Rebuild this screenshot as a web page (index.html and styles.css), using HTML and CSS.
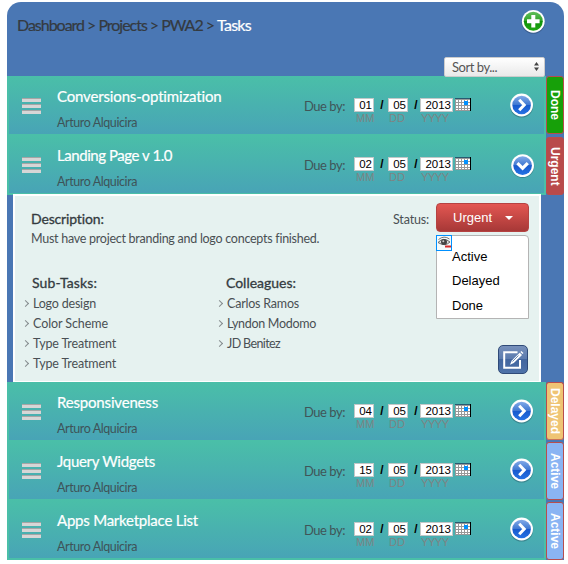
FILE: index.html
```html
<!DOCTYPE html>
<html lang="en">
<head>
<meta charset="utf-8">
<title>Tasks</title>
<link rel="stylesheet" href="styles.css">
<script src="tasks.js" defer></script>
</head>
<body>
<svg class="defs" aria-hidden="true">
  <defs>
    <linearGradient id="blue" x1="0" y1="0" x2="0" y2="1"><stop offset="0" stop-color="#82aae8"/><stop offset=".48" stop-color="#4079d2"/><stop offset=".5" stop-color="#1759cc"/><stop offset="1" stop-color="#2672e4"/></linearGradient>
    <linearGradient id="green" x1="0" y1="0" x2="0" y2="1"><stop offset="0" stop-color="#61be5c"/><stop offset=".48" stop-color="#2fa327"/><stop offset=".5" stop-color="#0f910b"/><stop offset="1" stop-color="#20a812"/></linearGradient>
    <symbol id="arrow" viewBox="0 0 26 26">
      <circle cx="12.6" cy="14" r="11.6" fill="#123" opacity=".28"/>
      <circle cx="12.6" cy="13" r="11.4" fill="#fff"/>
      <circle cx="12.6" cy="13" r="9.3" fill="url(#blue)"/>
      <path d="M10.2 7.8 L15.2 13 L10.2 18.2" fill="none" stroke="#fff" stroke-width="3"/>
    </symbol>
    <symbol id="arrow-down" viewBox="0 0 26 26">
      <circle cx="12.6" cy="13.3" r="11.6" fill="#123" opacity=".28"/>
      <circle cx="12.6" cy="12.6" r="11.4" fill="#fff"/>
      <circle cx="12.6" cy="12.6" r="9.3" fill="url(#blue)"/>
      <path d="M7.4 10.2 L12.6 15.2 L17.8 10.2" fill="none" stroke="#fff" stroke-width="3.2"/>
    </symbol>
    <symbol id="calendar" viewBox="0 0 16 13">
      <rect width="16" height="13" fill="#999"/>
      <path d="M1 2h2v2H1zM4 2h2v2H4zM7 2h2v2H7zM10 2h2v2h-2zM13 2h2v2h-2zM1 5h2v2H1zM4 5h2v2H4zM7 5h2v2H7zM13 5h2v2h-2zM1 8h2v2H1zM4 8h2v2H4zM7 8h2v2H7zM10 8h2v2h-2zM13 8h2v2h-2zM1 11h2v1H1zM4 11h2v1H4zM7 11h2v1H7zM10 11h2v1h-2zM13 11h2v1h-2z" fill="#fff"/>
      <rect width="16" height="1" fill="#285a70"/>
      <rect x="9" y="3" width="4" height="4" fill="#0090ff"/>
      <rect x="15" width="1" height="13" fill="#000"/>
    </symbol>
  </defs>
</svg>

<main class="app">
  <header class="head">
    <nav class="crumbs"><span data-w="197">Dashboard &gt; Projects &gt; PWA2 &gt;</span> <b data-w="34">Tasks</b></nav>
    <svg class="add" viewBox="0 0 26 26">
      <circle cx="13.3" cy="14.2" r="11.6" fill="#123" opacity=".28"/>
      <circle cx="13.3" cy="13.3" r="11.4" fill="#fff"/>
      <circle cx="13.3" cy="13.3" r="9.5" fill="url(#green)"/>
      <path d="M13.3 7v12.6M7 13.3h12.6" stroke="#fff" stroke-width="4"/>
    </svg>
    <div class="sort"><span data-w="45">Sort by...</span><svg viewBox="0 0 5 9"><path d="M0 3.5L2.5 0L5 3.5zM0 5.5L2.5 9L5 5.5z" fill="#444"/></svg></div>
  </header>

  <section class="task">
    <div class="row">
      <div class="handle"><i></i><i></i><i></i></div>
      <div class="name"><h2 data-w="165">Conversions-optimization</h2><p data-w="80">Arturo Alquicira</p></div>
      <span class="due"><span data-w="41">Due by:</span></span>
      <div class="date"><label><span>01</span><small>MM</small></label><em>/</em><label><span>05</span><small>DD</small></label><em>/</em><label class="year"><span>2013</span><small>YYYY</small></label><svg class="cal"><use href="#calendar"/></svg></div>
      <svg class="go"><use href="#arrow"/></svg>
    </div>
    <div class="tab done">Done</div>
  </section>

  <section class="task open">
    <div class="row">
      <div class="handle"><i></i><i></i><i></i></div>
      <div class="name"><h2 data-w="115">Landing Page v 1.0</h2><p data-w="80">Arturo Alquicira</p></div>
      <span class="due"><span data-w="41">Due by:</span></span>
      <div class="date"><label><span>02</span><small>MM</small></label><em>/</em><label><span>05</span><small>DD</small></label><em>/</em><label class="year"><span>2013</span><small>YYYY</small></label><svg class="cal"><use href="#calendar"/></svg></div>
      <svg class="go"><use href="#arrow-down"/></svg>
    </div>
    <div class="tab urgent">Urgent</div>
  </section>

  <section class="detail">
    <div class="info">
      <h3><span data-w="73">Description:</span></h3>
      <p><span data-w="288">Must have project branding and logo concepts finished.</span></p>
      <div class="lists">
        <div><h3><span data-w="65">Sub-Tasks:</span></h3>
          <ul><li><span data-w="63">Logo design</span></li><li><span data-w="75">Color Scheme</span></li><li><span data-w="83">Type Treatment</span></li><li><span data-w="83">Type Treatment</span></li></ul></div>
        <div><h3><span data-w="70">Colleagues:</span></h3>
          <ul><li><span data-w="72">Carlos Ramos</span></li><li><span data-w="89">Lyndon Modomo</span></li><li><span data-w="53">JD Benitez</span></li></ul></div>
      </div>
    </div>
    <div class="side">
      <div class="status">
        <span class="status-label"><span data-w="36">Status:</span></span>
        <div class="select">
          <div class="current">Urgent<i></i></div>
          <div class="menu">
            <svg class="eye" viewBox="0 0 16 16"><rect x=".5" y=".5" width="15" height="15" fill="#f4fafb" stroke="#0090ff"/><path d="M2 7.5Q7.5 1.5 14 7Q9 12 2 7.5" fill="#ddd" stroke="#666"/><path d="M2.5 4.5Q8 0 13.5 4" fill="none" stroke="#777"/><circle cx="8" cy="7" r="3" fill="#444"/><circle cx="7.3" cy="6.3" r="1" fill="#ccc"/><path d="M9 11.5h6" stroke="#d82a2a" stroke-width="2"/></svg>
            <span>Active</span><span>Delayed</span><span>Done</span>
          </div>
        </div>
      </div>
      <div class="edit"><svg viewBox="0 0 22 20"><path d="M15.5 2.2H2.2V17.8H18V10" fill="none" stroke="#fff" stroke-width="2"/><path d="M8 14.8L9.6 10.8L17.7 2.7L20 5L11.8 13.1Z" fill="#fff"/><path d="M18.4 2L20.6 4.2M10.5 11.5L16.5 5.5" stroke="#4a6fa2" stroke-width=".8"/><path d="M18.8 1.4L21 3.6" stroke="#fff" stroke-width="1.4"/></svg></div>
    </div>
  </section>

  <section class="task">
    <div class="row">
      <div class="handle"><i></i><i></i><i></i></div>
      <div class="name"><h2 data-w="101">Responsiveness</h2><p data-w="80">Arturo Alquicira</p></div>
      <span class="due"><span data-w="41">Due by:</span></span>
      <div class="date"><label><span>04</span><small>MM</small></label><em>/</em><label><span>05</span><small>DD</small></label><em>/</em><label class="year"><span>2013</span><small>YYYY</small></label><svg class="cal"><use href="#calendar"/></svg></div>
      <svg class="go"><use href="#arrow"/></svg>
    </div>
    <div class="tab delayed">Delayed</div>
  </section>

  <section class="task">
    <div class="row">
      <div class="handle"><i></i><i></i><i></i></div>
      <div class="name"><h2 data-w="98">Jquery Widgets</h2><p data-w="80">Arturo Alquicira</p></div>
      <span class="due"><span data-w="41">Due by:</span></span>
      <div class="date"><label><span>15</span><small>MM</small></label><em>/</em><label><span>05</span><small>DD</small></label><em>/</em><label class="year"><span>2013</span><small>YYYY</small></label><svg class="cal"><use href="#calendar"/></svg></div>
      <svg class="go"><use href="#arrow"/></svg>
    </div>
    <div class="tab active">Active</div>
  </section>

  <section class="task last">
    <div class="row">
      <div class="handle"><i></i><i></i><i></i></div>
      <div class="name"><h2 data-w="141">Apps Marketplace List</h2><p data-w="80">Arturo Alquicira</p></div>
      <span class="due"><span data-w="41">Due by:</span></span>
      <div class="date"><label><span>02</span><small>MM</small></label><em>/</em><label><span>05</span><small>DD</small></label><em>/</em><label class="year"><span>2013</span><small>YYYY</small></label><svg class="cal"><use href="#calendar"/></svg></div>
      <svg class="go"><use href="#arrow"/></svg>
    </div>
    <div class="tab active">Active</div>
  </section>
</main>
</body>
</html>
```
FILE: styles.css
```css
* { box-sizing: border-box; margin: 0; padding: 0; }
body { background: #fff; font-family: Lato, "Liberation Sans", sans-serif; color: #4a5054; overflow: hidden; }
.defs { position: absolute; width: 0; height: 0; }
[data-w] { display: inline-block; white-space: nowrap; }
.app { width: 557px; height: 558px; margin: 2px 0 0 7px; background: #4a77b4; border-radius: 14px 14px 0 0; }

.head { height: 74px; display: grid; grid-template-columns: 1fr auto; padding: 6px 18px 0 10px; }
.crumbs { font-size: 16px; line-height: 20px; padding-top: 7px; display: flex; gap: 3px; color: #343a40; -webkit-text-stroke: .2px; }
.crumbs b { font-weight: 400; color: #fff; }
.add { width: 26px; height: 26px; justify-self: end; }
.sort { grid-column: 1 / 3; justify-self: end; width: 101px; height: 20px; display: flex; align-items: center; justify-content: space-between; padding: 0 5px 0 7px; background: linear-gradient(#fff, #e9e9e9); border: 1px solid #ccc; border-radius: 2px; font-size: 13px; color: #555; align-self: end; margin: 0 1px -1px 0; position: relative; z-index: 1; }
.sort svg { width: 5px; height: 9px; margin-top: -1px; }

.task { height: 59px; display: flex; }
.task.open { height: 60px; }
.task.last { height: 60px; }
.row { width: 539px; display: flex; padding-left: 13px; background: linear-gradient(#4abfa8, #48a4b6); border: solid #4abfa8; border-width: 0 2px 1px; }
.open .row, .last .row { border-bottom-width: 2px; }
.handle { width: 35px; padding-top: 22px; }
.handle i { display: block; width: 19px; height: 4px; margin-bottom: 2px; background: #d6d6d6; border-top: 1px solid #a5a5a5; }
.name { width: 247px; padding-top: 10px; }
h2 { font-weight: 400; font-size: 15px; line-height: 20px; color: #fff; display: table !important; -webkit-text-stroke: .2px; }
.name p { font-size: 12.5px; line-height: 16px; margin-top: 9px; color: #3e5358; display: table; }
.due { width: 50px; font-size: 13px; line-height: 18px; padding-top: 21px; color: #405558; }
.date { display: flex; padding-top: 22px; font-family: "Liberation Sans", sans-serif; font-size: 11.5px; }
.date label { width: 20px; display: flex; flex-direction: column; }
.date label span { height: 14px; line-height: 13px; background: #fff; border: 1px solid #c2c8c8; color: #000; text-align: right; padding-right: 1px; }
.date small { font-size: 11px; line-height: 13px; color: #7d8484; padding-left: 2px; white-space: nowrap; }
.date em + label:not(.year) small { padding-left: 1px; }
.date label.year { width: 33px; }
.year small { padding-left: 1px; letter-spacing: -.4px; }
.date em { width: 14px; padding-left: 2px; text-align: center; font-style: normal; font-weight: 700; font-size: 12px; line-height: 15px; color: #000; }
.date em + .year { margin-left: -2px; }
.cal { width: 16px; height: 13px; margin-left: 2px; }
.go { width: 26px; height: 26px; margin: 16px 9px 0 auto; }
.open .go { margin: 18px 8px 0 auto; }

.tab { width: 18px; height: 58px; border: 1px solid #b84d4d; border-radius: 3px; writing-mode: vertical-rl; font: 700 12px/16px "Liberation Sans", sans-serif; color: #fff; text-align: center; }
.done { background: #17a009; }
.urgent { background: #b94a4b; height: 58px; margin-top: 2px; }
.delayed { background: #efc474; border-bottom-color: #ca7259; }
.active { background: #8ab4f3; margin-top: 1px; }
.last .tab { margin-top: 2px; }

.detail { width: 528px; height: 188px; margin: -1px 0 0 6px; display: flex; border: 2px solid #fff; border-bottom-width: 1px; background: #e6f2f0; position: relative; }
.info { width: 354px; flex: none; padding: 13px 0 0 17px; }
h3 { font-weight: 400; font-size: 14px; line-height: 19px; color: #343b40; -webkit-text-stroke: .3px; }
.info > p { font-size: 12.5px; line-height: 20px; margin-top: 1px; }
.info > p span { margin-left: -1px; }
.info h3 span { margin-left: -1px; }
.lists { display: flex; margin-top: 24px; }
.lists > div { width: 194px; flex: none; }
.lists h3 { margin-bottom: 2px; padding-left: 1px; }
ul { list-style: none; margin-left: -9px; }
li { display: flex; height: 20px; line-height: 20px; font-size: 12.5px; }
li::before { content: ""; width: 4px; height: 4px; margin: 7px 6px 0 0; border: solid #858b8e; border-width: 1.5px 1.5px 0 0; transform: rotate(45deg); box-sizing: content-box; flex: none; }
li span { margin-left: -1px; }
.side { flex: 1; display: flex; flex-direction: column; align-items: flex-end; padding: 7px 10px 0 0; }
.status { display: flex; gap: 7px; }
.status-label { font-size: 12.5px; line-height: 18px; padding-top: 8px; }
.select { width: 93px; }
.current { height: 29px; border-radius: 4px; border: 1px solid #b54342; background: linear-gradient(#e35752, #a73837); color: #fff; font: 13px/27px "Liberation Sans", sans-serif; padding-left: 16px; display: flex; align-items: center; gap: 13px; }
.current i { border: 4px solid transparent; border-top-color: #fff; border-bottom: 0; margin-top: 1px; }
.menu { position: relative; height: 84px; margin-top: 3px; padding: 9px 0 0 15px; display: flex; flex-direction: column; background: #fff; border: 1px solid #b4b4b4; border-radius: 3px 4px 0 0; color: #000; font: 13px/24.4px "Liberation Sans", sans-serif; }
.eye { position: absolute; left: -1px; top: -1px; width: 16px; height: 16px; }
.edit { width: 30px; height: 29px; margin: 26px 1px 0 0; border: 1px solid #2f4a78; border-radius: 5px; background: linear-gradient(#7790bb, #5b7bae 48%, #43669f 50%, #4e72a8); display: flex; align-items: center; justify-content: center; }
.edit svg { width: 22px; height: 20px; }
```
FILE: tasks.js
```js
// Tracks each label so that it fills its intended width.
document.querySelectorAll("[data-w]").forEach(function (el) {
  var gap = (Number(el.dataset.w) - el.getBoundingClientRect().width) / el.textContent.length;
  el.style.letterSpacing = gap + "px";
});
```
